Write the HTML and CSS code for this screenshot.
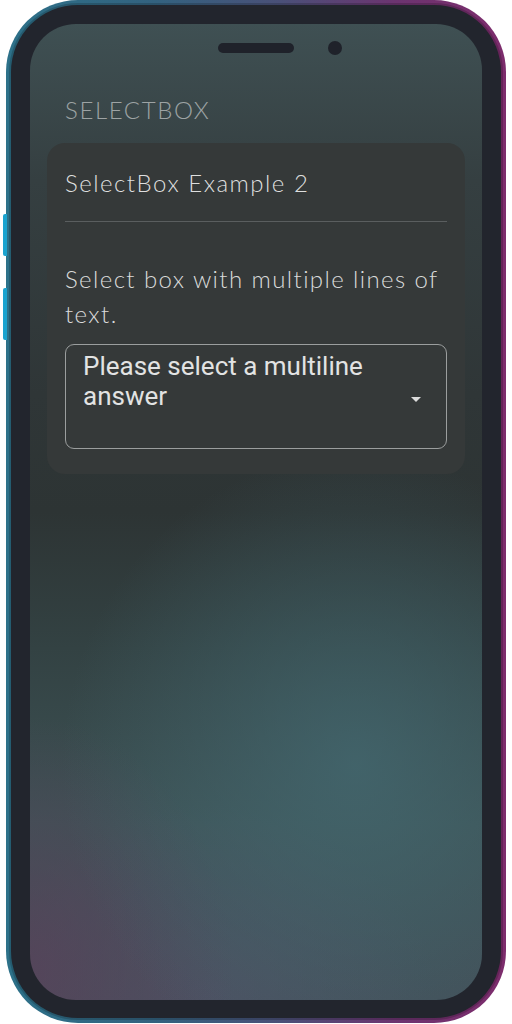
FILE: index.html
```html
<!DOCTYPE html>
<html lang="en">
<head>
<meta charset="utf-8">
<title>SelectBox</title>
<link rel="stylesheet" href="styles.css">
</head>
<body>
<div class="device">
  <span class="side-btn side-btn-1"></span>
  <span class="side-btn side-btn-2"></span>
  <div class="frame">
    <div class="body">
      <div class="screen">
        <div class="notch">
          <span class="notch-spacer"></span>
          <span class="speaker"></span>
          <span class="camera"></span>
        </div>
        <h1 class="section-title">SELECTBOX</h1>
        <div class="card">
          <div class="card-header">SelectBox Example 2</div>
          <div class="card-body">
            <p class="desc">Select box with multiple lines of text.</p>
            <div class="select">
              <div class="select-text">Please select a multiline answer</div>
              <svg class="select-arrow" width="10" height="5" viewBox="0 0 10 5"><path d="M0 0 L10 0 L5 5 Z" fill="#dcdcdc"/></svg>
            </div>
          </div>
        </div>
      </div>
    </div>
  </div>
</div>
</body>
</html>
```
FILE: styles.css
```css
html, body {
  margin: 0;
  padding: 0;
  background: #ffffff;
}
body {
  width: 512px;
  height: 1024px;
  overflow: hidden;
}
.device {
  position: relative;
  width: 500px;
  height: 1023px;
  margin-left: 6px;
}
.side-btn {
  position: absolute;
  left: -3px;
  width: 4px;
  background: #1aa3cf;
  border-radius: 2px 0 0 2px;
}
.side-btn-1 { top: 214px; height: 42px; }
.side-btn-2 { top: 288px; height: 52px; }
.frame {
  box-sizing: border-box;
  width: 500px;
  height: 1023px;
  padding: 5px;
  border-radius: 72px;
  background: linear-gradient(90deg, #2d7189 0%, #33627f 30%, #4a5078 55%, #6c3470 78%, #7d2c6c 100%);
}
.body {
  box-sizing: border-box;
  height: 100%;
  padding: 19px 19px 18px 19px;
  border-radius: 67px;
  background: #22252d;
  box-shadow: 0 0 0 2px rgba(0, 0, 0, 0.18);
}
.screen {
  box-sizing: border-box;
  height: 100%;
  border-radius: 46px;
  padding: 17px 17px 0 17px;
  overflow: hidden;
  display: flex;
  flex-direction: column;
  background:
    radial-gradient(ellipse 65% 32% at 72% 76%, rgba(68, 106, 114, 0.75), rgba(68, 106, 114, 0) 100%),
    radial-gradient(ellipse 45% 26% at 0% 97%, rgba(88, 66, 90, 0.8), rgba(88, 66, 90, 0) 100%),
    radial-gradient(ellipse 50% 20% at 40% 100%, rgba(80, 82, 102, 0.7), rgba(80, 82, 102, 0) 100%),
    linear-gradient(180deg, #3f5053 0%, #353f41 16%, #2f3637 38%, #2d3434 50%, #334243 64%, #3d5255 82%, #435059 100%);
}
.notch {
  height: 14px;
  margin-bottom: 39px;
  display: flex;
  justify-content: center;
  align-items: center;
  gap: 34px;
}
.notch-spacer {
  width: 14px;
  height: 14px;
}
.speaker {
  width: 76px;
  height: 10px;
  border-radius: 5px;
  background: #1f222a;
}
.camera {
  width: 14px;
  height: 14px;
  border-radius: 50%;
  background: #1f222a;
}
.section-title {
  margin: 0 0 17px 18px;
  font-family: "Lato", "Open Sans", sans-serif;
  font-weight: 300;
  font-size: 24px;
  line-height: 32px;
  color: #9da3a4;
  letter-spacing: 1.6px;
}
.card {
  background: #353939;
  border-radius: 18px;
  padding: 0 18px 25px 18px;
}
.card-header {
  padding: 24px 0 22px 0;
  border-bottom: 1px solid #5a5e5f;
  font-family: "Lato", "Open Sans", sans-serif;
  font-weight: 300;
  font-size: 24px;
  line-height: 32px;
  color: #dedfdf;
  letter-spacing: 1.5px;
}
.card-body {
  padding-top: 39px;
}
.desc {
  margin: 0 0 13px 0;
  font-family: "Lato", "Open Sans", sans-serif;
  font-weight: 300;
  font-size: 24px;
  line-height: 35px;
  color: #dadbdb;
  letter-spacing: 1.4px;
}
.select {
  box-sizing: border-box;
  height: 105px;
  border: 1px solid #9b9e9e;
  border-radius: 9px;
  padding: 6px 25px 0 17px;
  display: flex;
  align-items: flex-start;
}
.select-text {
  flex: 1;
  font-family: "Roboto", "Liberation Sans", sans-serif;
  font-weight: 400;
  font-size: 26px;
  line-height: 30px;
  color: #e2e3e3;
}
.select-arrow {
  flex: none;
  margin-top: 46px;
  margin-left: 8px;
}
```
